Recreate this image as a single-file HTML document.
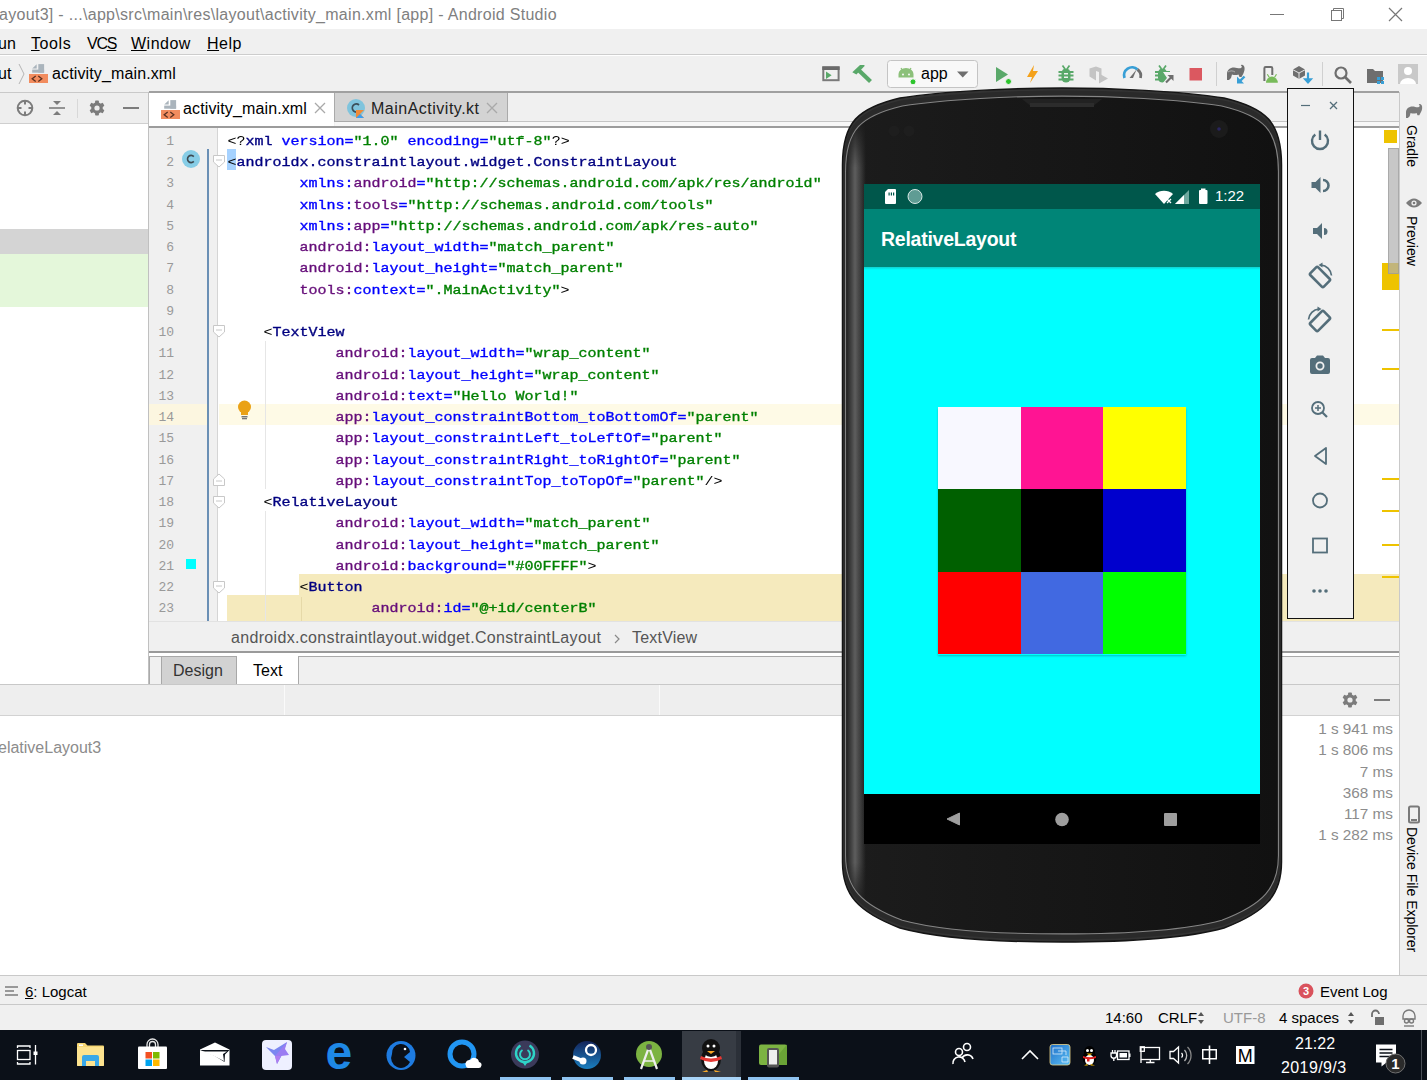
<!DOCTYPE html>
<html><head><meta charset="utf-8">
<style>
*{margin:0;padding:0;box-sizing:border-box}
html,body{width:1427px;height:1080px;overflow:hidden;background:#fff;font-family:"Liberation Sans",sans-serif;position:relative}
.a{position:absolute}
.ui{font-family:"Liberation Sans",sans-serif;white-space:nowrap}
.code{font-family:"Liberation Mono",monospace;font-size:15px;white-space:pre;font-weight:normal;-webkit-text-stroke:0.4px currentColor}
.menu{font-size:16px;color:#000;line-height:20px}
.nav{font-size:16px;color:#000;line-height:20px}
.crumb{font-size:16px;color:#555;line-height:20px}
.tabt{font-size:16px;line-height:20px}
.btxt{font-size:16px;color:#8c8c8c;line-height:20px}
.bar{font-size:15px;color:#000;line-height:20px}
.vt{writing-mode:vertical-rl;font-size:14px;color:#000;line-height:17px}
.tg{color:#000080}
.at{color:#0000ff}
.ns{color:#660e7a}
.vl{color:#008000}
.pl{color:#000;font-weight:normal;-webkit-text-stroke:0}
.lnum{font-family:"Liberation Mono",monospace;font-size:13px;color:#999;width:30px;text-align:right;line-height:21.25px}
.code{line-height:21.25px;transform:scaleY(0.84);transform-origin:0 14.6px}
</style></head><body>

<!-- title bar -->
<div class="a" style="left:0;top:0;width:1427px;height:29px;background:#fff"></div>
<div class="a ui" id="title" style="left:-1px;top:6px;font-size:16px;color:#808080;letter-spacing:0.3px">ayout3] - ...\app\src\main\res\layout\activity_main.xml [app] - Android Studio</div>

<!-- menu bar -->
<div class="a" style="left:0;top:29px;width:1427px;height:26px;background:#f0f0f0;border-bottom:1px solid #cdcdcd"></div>

<!-- nav bar -->
<div class="a" style="left:0;top:56px;width:1427px;height:37px;background:#f0f0f0;border-bottom:1px solid #c9c9c9"></div>


<!-- title text/controls -->
<svg class="a" style="left:1260px;top:0" width="167" height="29">
 <line x1="10" y1="14.5" x2="24" y2="14.5" stroke="#777" stroke-width="1"/>
 <rect x="71.5" y="10.5" width="10" height="10" fill="none" stroke="#777"/>
 <path d="M73.5 10.5 V8.5 H83.5 V18.5 H81.5" fill="none" stroke="#777"/>
 <path d="M129 8 L142 21 M142 8 L129 21" stroke="#777" stroke-width="1.2"/>
</svg>
<!-- menu -->
<div class="a ui menu" style="left:-2px;top:34px">un</div>
<div class="a ui menu" style="left:31px;top:34px;letter-spacing:0.6px"><u>T</u>ools</div>
<div class="a ui menu" style="left:87px;top:34px;letter-spacing:-1.2px">VC<u>S</u></div>
<div class="a ui menu" style="left:131px;top:34px;letter-spacing:0.5px"><u>W</u>indow</div>
<div class="a ui menu" style="left:207px;top:34px;letter-spacing:0.5px"><u>H</u>elp</div>
<!-- nav -->
<div class="a ui nav" style="left:-2px;top:64px">ut</div>
<svg class="a" style="left:17px;top:63px" width="10" height="22"><path d="M2 1 L7 11 L2 21" fill="none" stroke="#b5b5b5" stroke-width="1"/></svg>
<svg class="a xmlico" style="left:29px;top:64px" width="20" height="20"><path d="M3.2 4.5 L7.7 0.3 V4.5 Z" fill="#aab4bc"/><rect x="9.3" y="0.1" width="5.8" height="8.6" fill="#aab4bc"/><rect x="3.2" y="5.6" width="11.9" height="3.1" fill="#aab4bc"/><rect x="0" y="10" width="19" height="9" fill="#f28c5e"/><path d="M6.7 12 L3.2 14.7 L6.7 17.4 M9.3 12 L12.8 14.7 L9.3 17.4" fill="none" stroke="#5a3020" stroke-width="1.3"/></svg>
<div class="a ui nav" style="left:52px;top:64px;letter-spacing:0.13px">activity_main.xml</div>


<!-- nav toolbar -->
<svg class="a" style="left:815px;top:58px" width="612" height="32">
 <!-- terminal -->
 <rect x="8.3" y="9.4" width="15.3" height="12.8" fill="none" stroke="#7a7a7a" stroke-width="2"/>
 <rect x="7.3" y="8.4" width="17.3" height="3.6" fill="#6a6a6a"/>
 <path d="M11 13.6 L16.6 17.2 L11 20.9 Z" fill="#59a869"/>
 <!-- hammer -->
 <path d="M37.3,14.3 L45,7 L49.4,7 L49.6,8 L41.4,16.6 Z" fill="#59a869"/>
 <path d="M44,12.5 L55.5,23.5" stroke="#59a869" stroke-width="4.2"/>
 <!-- app dropdown -->
 <rect x="72.5" y="2.5" width="90" height="27" rx="3" fill="#f8f8f8" stroke="#c4c4c4"/>
 <path d="M83.5 19.5 V16 A7.5 6 0 0 1 98.5 16 V19.5 Z" fill="#8cc07a"/>
 <path d="M86 10 L88 13 M96 10 L94 13" stroke="#8cc07a" stroke-width="1.3"/>
 <circle cx="88" cy="16.5" r="1" fill="#f8f8f8"/><circle cx="94" cy="16.5" r="1" fill="#f8f8f8"/>
 <circle cx="98" cy="23.8" r="3" fill="#2dc52d" stroke="#f8f8f8" stroke-width="1"/>
 <path d="M142 13.5 H153.5 L147.75 19.5 Z" fill="#6e6e6e"/>
 <!-- run -->
 <path d="M181 9 L193 16.5 L181 24 Z" fill="#59a869"/>
 <circle cx="193.5" cy="23.5" r="3" fill="#2dc52d" stroke="#f2f2f2" stroke-width="1"/>
 <!-- lightning -->
 <path d="M219 7 L212 19 H217 L215 25 L223 13 H218 Z" fill="#f4a11a"/>
 <!-- bug -->
 <g fill="#59a869">
  <rect x="243.5" y="13" width="15" height="2"/><rect x="243.5" y="16.5" width="15" height="2"/><rect x="243.5" y="20.5" width="15" height="2"/>
  <rect x="246.5" y="10.5" width="9" height="14" rx="4.5"/>
 </g>
 <path d="M247.5 7.5 L250 11 M254.5 7.5 L252 11" stroke="#59a869" stroke-width="1.7"/>
 <rect x="249" y="15" width="4" height="1.5" fill="#f2f2f2"/><rect x="249" y="18.5" width="4" height="1.5" fill="#f2f2f2"/>
 <!-- gray shield -->
 <path d="M274.5 10.5 L281 8.5 L286.5 10.5 V18 L284 21 V14 L281 13 V22.5 L274.5 18.5 Z" fill="#c4c4c4"/>
 <path d="M284 15.5 L293 20.5 L284 25.5 Z" fill="#c4c4c4"/>
 <!-- gauge -->
 <path d="M309.5 20 A8 8 0 0 1 322.5 11.5" fill="none" stroke="#389fd6" stroke-width="2.8"/>
 <path d="M322.5 11.5 A8 8 0 0 1 325.5 20" fill="none" stroke="#6e6e6e" stroke-width="2.8"/>
 <path d="M314.5 20 L321.5 11.5 L318 20 Z" fill="#6e6e6e"/>
 <!-- bug arrow -->
 <g fill="#59a869">
  <rect x="340" y="13" width="15" height="2"/><rect x="340" y="16.5" width="11" height="2"/><rect x="340" y="20.5" width="9" height="2"/>
  <rect x="343" y="10.5" width="9" height="14" rx="4.5"/>
 </g>
 <path d="M344 7.5 L346.5 11 M351 7.5 L348.5 11" stroke="#59a869" stroke-width="1.7"/>
 <path d="M348 14 L352 20 L347 26 H358 V14 Z" fill="#f2f2f2"/>
 <path d="M351 24.5 L357 18.5" stroke="#6e6e6e" stroke-width="2.2"/><path d="M352.5 17 H358.5 V23 Z" fill="#6e6e6e"/>
 <!-- stop -->
 <rect x="374.5" y="10" width="12.5" height="12.5" fill="#db5860"/>
 <line x1="401.5" y1="4" x2="401.5" y2="28" stroke="#d0d0d0"/>
 <!-- gradle -->
 <path d="M412,22 L412,16 C412,12 415,9.5 419,9.5 C422,9.5 424,11 426,10 C427.3,9.2 427,7.8 425.8,7.5 L426.5,6.8 C428.8,6.8 430,9 429.5,12 C429,15 427.5,17 426.5,19 L424.5,19 L423.5,16.5 C421.5,17.3 419,17.3 417,16.5 L416,20 L414,22 Z" fill="#6e6e6e"/>
 <path d="M413,14 C415,12.5 418,12.5 420,14" fill="none" stroke="#f2f2f2" stroke-width="0.8" opacity="0.6"/>
 <path d="M429.5,18.5 L424.5,23.5" stroke="#389fd6" stroke-width="2.4"/><path d="M422,18.5 V25.5 H429 Z" fill="#389fd6"/>
 <!-- device android -->
 <path d="M449.4,23 V10.3 A1.3,1.3 0 0 1 450.7,9 H456 A1.3,1.3 0 0 1 457.3,10.3 V17" fill="none" stroke="#6e6e6e" stroke-width="2"/>
 <path d="M451,24.8 A5.9,6.2 0 0 1 462.8,24.8 Z" fill="#78bb5a"/>
 <path d="M452.3,16.3 L454.2,19.3 M461.5,16.3 L459.6,19.3" stroke="#78bb5a" stroke-width="1.2"/>
 <!-- package -->
 <path d="M478,11.5 L484,8 L490,11.5 V17.5 L484,21 L478,17.5 Z" fill="#6e6e6e"/>
 <path d="M478,11.8 L484,15 L490,11.8 M484,15 V21" fill="none" stroke="#f2f2f2" stroke-width="0.9"/>
 <path d="M493,14.5 V21" stroke="#389fd6" stroke-width="2.2"/><path d="M487.8,20.2 H498.2 L493,26 Z" fill="#389fd6"/>
 <line x1="507.5" y1="4" x2="507.5" y2="28" stroke="#d0d0d0"/>
 <!-- search -->
 <circle cx="526" cy="15" r="5.5" fill="none" stroke="#6e6e6e" stroke-width="2.2"/>
 <path d="M530 19 L536 25" stroke="#6e6e6e" stroke-width="2.6"/>
 <!-- folder -->
 <path d="M552 11 H558 L560 13 H568 V25 H552 Z" fill="#6e6e6e"/>
 <rect x="562" y="19" width="3" height="3" fill="#389fd6"/><rect x="566" y="19" width="3" height="3" fill="#389fd6"/><rect x="562" y="23" width="3" height="3" fill="#389fd6"/><rect x="566" y="23" width="3" height="3" fill="#389fd6"/>
 <!-- avatar -->
 <rect x="583" y="6" width="20" height="20" fill="#c9c9c9"/>
 <circle cx="593" cy="13" r="4" fill="#fff"/><path d="M585 26 A8 6 0 0 1 601 26 Z" fill="#fff"/>
</svg>
<div class="a ui nav" style="left:921px;top:64px">app</div>

<!-- left panel -->
<div class="a" style="left:0;top:93px;width:148px;height:31px;background:#eeeeee;border-bottom:1px solid #cfcfcf"></div>
<div class="a" style="left:0;top:124px;width:148px;height:560px;background:#fff"></div>
<div class="a" style="left:0;top:229px;width:148px;height:25px;background:#d4d4d4"></div>
<div class="a" style="left:0;top:254px;width:148px;height:53px;background:#e4f7da"></div>
<div class="a" style="left:148px;top:92px;width:1px;height:592px;background:#c0c0c0"></div>


<!-- left header icons -->
<svg class="a" style="left:0;top:92px" width="148" height="32">
 <circle cx="25" cy="16" r="7.3" fill="none" stroke="#7c7c7c" stroke-width="2"/>
 <path d="M25 8.5 V12.5 M25 19.5 V23.5 M17.5 16 H21.5 M28.5 16 H32.5" stroke="#7c7c7c" stroke-width="2"/>
 <path d="M49 16 H65" stroke="#7c7c7c" stroke-width="1.6"/>
 <path d="M53 9 H61 L57 13 Z M53 23 H61 L57 19 Z" fill="#7c7c7c"/>
 <line x1="77.5" y1="7" x2="77.5" y2="26" stroke="#d8d8d8"/>
 <g transform="translate(97,16)" fill="#7c7c7c">
  <circle r="5.8"/>
  <rect x="-1.9" y="-7.6" width="3.8" height="15.2" rx="0.8"/><rect x="-1.9" y="-7.6" width="3.8" height="15.2" rx="0.8" transform="rotate(60)"/><rect x="-1.9" y="-7.6" width="3.8" height="15.2" rx="0.8" transform="rotate(120)"/>
  <circle r="2.6" fill="#eee"/>
 </g>
 <rect x="123" y="15" width="16" height="2" fill="#7c7c7c"/>
</svg>

<!-- editor tabs -->
<div class="a" style="left:149px;top:92px;width:1250px;height:36px;background:#f0f0f0"></div>


<div class="a" style="left:149px;top:91px;width:1250px;height:2px;background:#a0a0a0"></div>
<div class="a" style="left:149px;top:93px;width:185px;height:35px;background:#fff"></div>
<div class="a" style="left:507px;top:121px;width:892px;height:1px;background:#c4c4c4"></div>
<div class="a" style="left:507px;top:122px;width:892px;height:4px;background:#f7f7f7"></div>
<div class="a" style="left:334px;top:93px;width:174px;height:29px;background:#d3d3d3;border:1px solid #aaa;border-top:none"></div>
<div class="a" style="left:335px;top:122px;width:172px;height:4px;background:#f7f7f7"></div>
<div class="a" style="left:149px;top:126px;width:1250px;height:2px;background:#9c9c9c"></div>
<svg class="a" style="left:161px;top:100px" width="20" height="20"><path d="M3.2 4.5 L7.7 0.3 V4.5 Z" fill="#aab4bc"/><rect x="9.3" y="0.1" width="5.8" height="8.6" fill="#aab4bc"/><rect x="3.2" y="5.6" width="11.9" height="3.1" fill="#aab4bc"/><rect x="0" y="10" width="19" height="9" fill="#f28c5e"/><path d="M6.7 12 L3.2 14.7 L6.7 17.4 M9.3 12 L12.8 14.7 L9.3 17.4" fill="none" stroke="#5a3020" stroke-width="1.3"/></svg>
<div class="a ui nav" style="left:183px;top:99px;letter-spacing:0.13px">activity_main.xml</div>
<svg class="a" style="left:314px;top:102px" width="12" height="12"><path d="M1 1 L11 11 M11 1 L1 11" stroke="#a9a9a9" stroke-width="1.3"/></svg>
<svg class="a" style="left:346px;top:98px" width="22" height="22"><circle cx="10" cy="10" r="9" fill="#7fc4dd"/><path d="M13 7 A4 4 0 1 0 13 13" fill="none" stroke="#3b4f5a" stroke-width="1.8"/><path d="M10 12 H18 L14 16 L18 20 H10 Z" fill="#f08a38"/><path d="M10 20 L14 16 L18 20 Z" fill="#3a9ef0"/></svg>
<div class="a ui nav" style="left:371px;top:99px;color:#222;letter-spacing:0.5px">MainActivity.kt</div>
<svg class="a" style="left:486px;top:102px" width="12" height="12"><path d="M1 1 L11 11 M11 1 L1 11" stroke="#a9a9a9" stroke-width="1.3"/></svg>

<!-- editor -->
<div class="a" style="left:149px;top:128px;width:1250px;height:493px;background:#fff"></div>
<div class="a" style="left:149px;top:128px;width:69px;height:493px;background:#f0f0f0;border-right:1px solid #d5d5d5"></div>

<!-- breadcrumb -->
<div class="a" style="left:149px;top:621px;width:1250px;height:30px;background:#f0f0f0;border-top:1px solid #e2e2e2"></div>
<div class="a" style="left:149px;top:651px;width:1250px;height:2px;background:#9a9a9a"></div>
<!-- design/text tab bar -->
<div class="a" style="left:149px;top:653px;width:1250px;height:31px;background:#f0f0f0"></div>

<!-- build panel header -->
<div class="a" style="left:0;top:684px;width:1399px;height:32px;background:#eeeeee;border-top:1px solid #c8c8c8;border-bottom:1px solid #d2d2d2"></div>
<div class="a" style="left:0;top:716px;width:1399px;height:259px;background:#fff"></div>


<!-- right sidebar -->
<div class="a" style="left:1399px;top:92px;width:28px;height:883px;background:#f0f0f0;border-left:1px solid #c9c9c9"></div>

<!-- bottom tool bar -->
<div class="a" style="left:0;top:975px;width:1427px;height:30px;background:#f0f0f0;border-top:1px solid #c9c9c9;border-bottom:1px solid #c9c9c9"></div>
<!-- status bar -->
<div class="a" style="left:0;top:1005px;width:1427px;height:25px;background:#f0f0f0"></div>

<!-- taskbar -->
<div class="a" style="left:0;top:1030px;width:1427px;height:50px;background:#0b1018"></div>


<!-- line highlights -->
<div class="a" style="left:149px;top:404px;width:58px;height:21px;background:#fcf6e0"></div>
<div class="a" style="left:219px;top:404px;width:1180px;height:21px;background:#fefae6"></div>
<div class="a" style="left:299px;top:574px;width:1100px;height:21px;background:#f5eabd"></div>
<div class="a" style="left:227px;top:595px;width:1172px;height:26px;background:#f5eabd"></div>
<div class="a" style="left:207px;top:149px;width:1.5px;height:472px;background:#6a8fb5"></div>
<div class="a" style="left:265px;top:341px;width:1px;height:148px;background:#e6e6e6"></div>
<div class="a" style="left:265px;top:511px;width:1px;height:110px;background:#e6e6e6"></div>
<div class="a" style="left:301px;top:597px;width:1px;height:24px;background:#e6d9a8"></div>
<!-- C badge -->
<svg class="a" style="left:181px;top:149px" width="20" height="20"><circle cx="10" cy="10" r="9" fill="#87cde6"/><path d="M12.8 7.6 A3.6 3.6 0 1 0 12.8 12.4" fill="none" stroke="#3d4a52" stroke-width="1.6"/></svg>
<!-- selection -->
<div class="a" style="left:227px;top:149px;width:9px;height:21px;background:#a6d2ff"></div>
<!-- fold markers -->
<svg class="a" style="left:211px;top:150px" width="16" height="460">
 <g fill="#fff" stroke="#c8c8c8" stroke-width="1">
 <path d="M2.5 5.5 H13.5 V12 L8 17 L2.5 12 Z"/>
 <path d="M2.5 175.5 H13.5 V182 L8 187 L2.5 182 Z"/>
 <path d="M2.5 346.5 H13.5 V353 L8 358 L2.5 353 Z"/>
 <path d="M2.5 431.5 H13.5 V438 L8 443 L2.5 438 Z"/>
 <path d="M2.5 335.5 H13.5 V329 L8 324 L2.5 329 Z"/>
 </g>
 <g stroke="#c8c8c8"><path d="M5 10 H11 M5 180 H11 M5 351 H11 M5 436 H11 M5 331 H11"/></g>
</svg>
<!-- bulb -->
<svg class="a" style="left:236px;top:400px" width="18" height="20"><circle cx="8.5" cy="7" r="6.5" fill="#eaa116"/><rect x="5" y="12" width="7" height="3" fill="#eaa116"/><rect x="5.5" y="16" width="6" height="1.5" fill="#777"/><rect x="6" y="18" width="5" height="1.3" fill="#777"/></svg>
<!-- cyan square -->
<div class="a" style="left:186px;top:559px;width:10px;height:10px;background:#00ffff"></div>
<!-- error stripe -->
<div class="a" style="left:1384px;top:130px;width:13px;height:13px;background:#eec300"></div>
<div class="a" style="left:1382px;top:263px;width:17px;height:27px;background:#eec300"></div>
<div class="a" style="left:1388px;top:148px;width:11px;height:126px;background:rgba(175,175,175,0.7);border:1px solid rgba(150,150,150,0.6)"></div>
<div class="a" style="left:1382px;top:329px;width:17px;height:2px;background:#eec300"></div>
<div class="a" style="left:1382px;top:368px;width:17px;height:2px;background:#eec300"></div>
<div class="a" style="left:1382px;top:478px;width:17px;height:2px;background:#eec300"></div>
<div class="a" style="left:1382px;top:510px;width:17px;height:2px;background:#eec300"></div>
<div class="a" style="left:1382px;top:544px;width:17px;height:2px;background:#eec300"></div>
<div class="a" style="left:1382px;top:576px;width:17px;height:2px;background:#eec300"></div>
<div class="a" style="left:1399px;top:92px;width:1px;height:530px;background:#c9c9c9"></div>


<!-- right sidebar content -->
<svg class="a" style="left:1403px;top:100px" width="24" height="115">
 <path transform="translate(3,4) scale(0.92) translate(-412,-6.8)" d="M412,22 L412,16 C412,12 415,9.5 419,9.5 C422,9.5 424,11 426,10 C427.3,9.2 427,7.8 425.8,7.5 L426.5,6.8 C428.8,6.8 430,9 429.5,12 C429,15 427.5,17 426.5,19 L424.5,19 L423.5,16.5 C421.5,17.3 419,17.3 417,16.5 L416,20 L414,22 Z" fill="#7a7a7a"/>
 <path d="M3 103 Q11 94 19 103 Q11 112 3 103 Z" fill="#7a7a7a"/><circle cx="11" cy="103" r="2.6" fill="#f0f0f0"/><circle cx="11" cy="103" r="1.3" fill="#7a7a7a"/>
</svg>
<div class="a ui vt" style="left:1403px;top:125px">Gradle</div>
<div class="a ui vt" style="left:1403px;top:216px">Preview</div>
<svg class="a" style="left:1406px;top:805px" width="16" height="19"><rect x="3" y="1.5" width="10" height="16" rx="1.5" fill="none" stroke="#7a7a7a" stroke-width="2"/><rect x="5" y="14" width="6" height="2" fill="#7a7a7a"/></svg>
<div class="a ui vt" style="left:1403px;top:827px">Device File Explorer</div>


<!-- taskbar icons -->
<div class="a" style="left:682px;top:1031px;width:54px;height:49px;background:#373c44"></div>
<div class="a" style="left:736px;top:1031px;width:5px;height:49px;background:#2b3038"></div>
<div class="a" style="left:500px;top:1077px;width:51px;height:3px;background:#8fc3f0"></div>
<div class="a" style="left:562px;top:1077px;width:51px;height:3px;background:#8fc3f0"></div>
<div class="a" style="left:624px;top:1077px;width:51px;height:3px;background:#8fc3f0"></div>
<div class="a" style="left:682px;top:1077px;width:59px;height:3px;background:#a8d4f8"></div>
<div class="a" style="left:748px;top:1077px;width:51px;height:3px;background:#8fc3f0"></div>
<svg class="a" style="left:0;top:1030px" width="1427" height="50">
 <!-- task view -->
 <g fill="none" stroke="#fff" stroke-width="1.3"><path d="M17.5 18 V16 H30 V18 M17.5 32 V34 H30 V32"/><rect x="17.5" y="20.5" width="12.5" height="9"/><path d="M35.5 15 V34.5"/></g>
 <rect x="33.5" y="21.5" width="4" height="3.5" fill="#fff"/>
 <!-- explorer -->
 <path d="M77 14 A1 1 0 0 1 78 13 H85 L87.5 15.5 H103 A1 1 0 0 1 104 16.5 V35 A1 1 0 0 1 103 36 H78 A1 1 0 0 1 77 35 Z" fill="#f7d774"/>
 <path d="M77 17 H104 V35 A1 1 0 0 1 103 36 H78 A1 1 0 0 1 77 35 Z" fill="#fde38f"/>
 <rect x="79" y="14.5" width="4" height="1.5" fill="#fff"/>
 <path d="M82 36 V27 A2 2 0 0 1 84 25 H97 A2 2 0 0 1 99 27 V36 H95 V31 H86 V36 Z" fill="#3aa8e8"/>
 <!-- store -->
 <path d="M147 17 V14.5 A5.5 5.5 0 0 1 158 14.5 V17 M149.5 17 V14.5 A3 3 0 0 1 155.5 14.5 V17" fill="none" stroke="#e8e8e8" stroke-width="1.3"/>
 <rect x="138" y="16.5" width="29" height="22.5" rx="1" fill="#fff"/>
 <rect x="145.5" y="22" width="6.5" height="6.5" fill="#f25022"/><rect x="153" y="22" width="6.5" height="6.5" fill="#7fba00"/><rect x="145.5" y="29.5" width="6.5" height="6.5" fill="#00a4ef"/><rect x="153" y="29.5" width="6.5" height="6.5" fill="#ffb900"/>
 <!-- mail -->
 <path d="M200 19.5 L215 12.5 L229.5 19.5 V35.5 H200 Z" fill="#fff"/>
 <path d="M200 20 H229.5 L225 24.5 L224.5 32 L214 25.5 Z" fill="#0b1018"/>
 <path d="M201.5 21.5 L214 26 L224 31 L223 24 L227 21.5 Z" fill="#fff"/>
 <!-- feather app -->
 <rect x="262" y="10" width="30" height="30" rx="4" fill="#eef0ff"/>
 <path d="M266 17 L274 20 L287 12 L282 25 L277 34 L275 26 Z" fill="#7b86f0"/><path d="M275 26 L287 12 L285 19 L289 25 L281 26 Z" fill="#9a7cf2"/><path d="M277 34 L281 26 L275 26 Z" fill="#b07cf0"/>
 <!-- edge -->
 <text x="325.5" y="39" font-size="48" font-weight="bold" font-family="Liberation Sans" fill="#1e88e5">e</text>
 <!-- dolphin -->
 <circle cx="401" cy="25.5" r="14.5" fill="#1e7be0"/><path d="M392 24 A9 9 0 0 1 410 22 L404 27 L410 32 A9 9 0 0 1 392 24 Z" fill="#0b1018"/><circle cx="405" cy="19" r="1.3" fill="#fff"/>
 <!-- Q browser -->
 <circle cx="462" cy="24" r="12" fill="none" stroke="#2196f3" stroke-width="5"/>
 <path d="M466 36 A4 4 0 0 1 470 30 A5 5 0 0 1 479 32 A3 3 0 0 1 478 38 H468 A2 2 0 0 1 466 36 Z" fill="#fff"/>
 <!-- dark circle -->
 <circle cx="525" cy="24.5" r="14" fill="#3b3a5a"/>
 <path d="M520.5 15.5 A9 9 0 1 0 529.5 15.5" fill="none" stroke="#2ed3c7" stroke-width="2.4"/>
 <path d="M522.5 20 A5 5 0 1 0 527.5 20" fill="none" stroke="#2ed3c7" stroke-width="2"/>
 <path d="M523 33 H527 L525 36 Z" fill="#2ed3c7"/>
 <!-- steam -->
 <defs><linearGradient id="stg" x1="0" y1="0" x2="0" y2="1"><stop offset="0" stop-color="#14245a"/><stop offset="1" stop-color="#1a7fc0"/></linearGradient></defs><circle cx="587" cy="25" r="14" fill="url(#stg)"/><circle cx="591" cy="20" r="5" fill="none" stroke="#fff" stroke-width="2.3"/><path d="M573 27 L583 31" stroke="#fff" stroke-width="4"/><circle cx="583" cy="31" r="3.5" fill="#fff"/>
 <!-- android studio -->
 <circle cx="649" cy="24" r="13" fill="#7cb342"/><path d="M641 39 L649 17 L657 39" fill="none" stroke="#eee" stroke-width="2.2"/><path d="M644 31 H654" stroke="#eee" stroke-width="1.5"/><circle cx="649" cy="17" r="3" fill="#555"/>
 <!-- QQ -->
 <ellipse cx="711" cy="29" rx="10" ry="12" fill="#111"/><ellipse cx="711" cy="31" rx="7" ry="8" fill="#fff"/><ellipse cx="711" cy="18" rx="9" ry="9" fill="#111"/><path d="M701 26 Q711 31 721 26 L722 29 Q711 35 700 29 Z" fill="#e53935"/><path d="M707 21 L711 24 L715 21 Z" fill="#f9a825"/><circle cx="708" cy="16" r="1.5" fill="#fff"/><circle cx="714" cy="16" r="1.5" fill="#fff"/>
 <path d="M702 42 H708 L707 40 Z M714 40 L715 42 H721 Z" fill="#f9a825"/>
 <!-- green phone -->
 <rect x="759" y="14.5" width="28" height="20.5" rx="2" fill="#7cb342"/><path d="M787 14.5 V35 H770 Z" fill="#6aa336"/><rect x="767" y="18" width="12" height="19.5" rx="2" fill="#555"/><rect x="769" y="20" width="8" height="14.5" fill="#eee"/>
 <!-- people -->
 <g fill="none" stroke="#fff" stroke-width="1.6"><circle cx="959" cy="22" r="3.5"/><path d="M953 34 A6 6 0 0 1 965 32"/><circle cx="967" cy="17" r="3.5"/><path d="M962 28 A6 6 0 0 1 973 29"/></g>
 <!-- chevron -->
 <path d="M1022 29 L1030 21 L1038 29" fill="none" stroke="#fff" stroke-width="1.6"/>
 <!-- intel -->
 <defs><linearGradient id="itg" x1="0" y1="0" x2="1" y2="1"><stop offset="0" stop-color="#1f6fc8"/><stop offset="1" stop-color="#5cc0f5"/></linearGradient></defs>
 <rect x="1050" y="14.5" width="20" height="20.5" rx="2.5" fill="url(#itg)" stroke="#e9d48a" stroke-width="0.8"/>
 <g fill="none" stroke="#d8ecfb" stroke-width="0.8"><rect x="1053" y="18" width="9" height="6"/><path d="M1058 21 H1066 V25 M1062 27 H1068 V32 H1062 Z"/></g>
 <!-- small QQ -->
 <ellipse cx="1089.5" cy="28" rx="7" ry="7.5" fill="#000"/><ellipse cx="1089.5" cy="22" rx="5.5" ry="6" fill="#000"/>
 <ellipse cx="1089.5" cy="30" rx="4.5" ry="5" fill="#fff"/>
 <circle cx="1087.5" cy="20.5" r="1.5" fill="#fff"/><circle cx="1091.5" cy="20.5" r="1.5" fill="#fff"/>
 <path d="M1086.5 23.5 H1092.5 L1089.5 25.5 Z" fill="#f5b800"/>
 <path d="M1083 26 Q1089.5 28.5 1096 26 V28 Q1089.5 30.5 1083 28 Z" fill="#e02020"/><rect x="1087" y="27.5" width="2.5" height="4" fill="#e02020"/>
 <path d="M1084 35.5 H1088 L1087 34 Z M1091 34 L1090.5 35.5 H1095 Z" fill="#f5b800"/>
 <!-- tpower -->
 <g fill="none" stroke="#fff" stroke-width="1.3"><path d="M1112.5 20 V23 M1115 20 V23 M1111 23 H1116.5 V25.5 A2.7 2.7 0 0 1 1111 25.5 Z M1113.8 28 V31"/><rect x="1117.5" y="21" width="11.5" height="8.5"/></g>
 <rect x="1119.5" y="23" width="7.5" height="4.5" fill="#fff"/><rect x="1129" y="23.5" width="1.5" height="3.5" fill="#fff"/>
 <!-- network -->
 <g fill="none" stroke="#fff" stroke-width="1.3"><rect x="1141" y="17.5" width="18.5" height="12"/><path d="M1150.3 29.5 V32.5 M1146 32.5 H1154.5 M1141 29.5 V33"/><rect x="1140.3" y="16.8" width="4" height="4.5"/></g>
 <!-- volume -->
 <g fill="none" stroke="#fff" stroke-width="1.3"><path d="M1170 21.5 H1173.5 L1178.5 17 V33 L1173.5 28.5 H1170 Z"/><path d="M1181.5 23 A3 3 0 0 1 1181.5 27.5"/><path d="M1184.5 20 A8 8 0 0 1 1184.5 31" stroke="#bbb"/><path d="M1187.5 17 A12 12 0 0 1 1187.5 34" stroke="#888"/></g>
 <!-- M -->
 <rect x="1236" y="16" width="18.5" height="18" fill="#fff"/>
 <text x="1245.2" y="32" font-size="18" font-family="Liberation Sans" fill="#000" text-anchor="middle">M</text>
 <!-- notification -->
 <path d="M1376 14.5 H1396 V32.5 H1386.5 L1381.5 36.5 V32.5 H1376 Z" fill="#fff"/><path d="M1379.5 19.5 H1392.5 M1379.5 23 H1392.5 M1379.5 26.5 H1390" stroke="#0b1018" stroke-width="1.3"/>
 <circle cx="1395.5" cy="33.5" r="9.5" fill="#2b2b2b" stroke="#707070" stroke-width="1"/><text x="1395.5" y="39" font-size="15" font-weight="bold" fill="#fff" text-anchor="middle" font-family="Liberation Sans">1</text>
 <line x1="1421.5" y1="0" x2="1421.5" y2="50" stroke="#4a4f57" stroke-width="1"/>
</svg>
<svg class="a" style="left:1200px;top:1044px" width="20" height="22"><rect x="2.75" y="5.75" width="13.5" height="9" fill="none" stroke="#fff" stroke-width="1.5"/><path d="M9.5 1.5 V20" stroke="#fff" stroke-width="1.6"/></svg>
<div class="a ui" style="left:1295px;top:1034px;font-size:16px;color:#fff;line-height:20px;letter-spacing:0px">21:22</div>
<div class="a ui" style="left:1281px;top:1057.5px;font-size:16px;color:#fff;line-height:20px;letter-spacing:0.4px">2019/9/3</div>

<!-- breadcrumb text -->
<div class="a ui crumb" id="crumb1" style="left:231px;top:628px;letter-spacing:0.33px">androidx.constraintlayout.widget.ConstraintLayout</div>
<svg class="a" style="left:613px;top:633px" width="8" height="12"><path d="M2 2 L6 6 L2 10" fill="none" stroke="#8a8a8a" stroke-width="1.2"/></svg>
<div class="a ui crumb" id="crumb2" style="left:632px;top:628px;letter-spacing:0.2px">TextView</div>
<!-- design / text tabs -->
<div class="a" style="left:149px;top:653px;width:1250px;height:3px;background:#fff"></div>
<div class="a" style="left:149px;top:656px;width:13px;height:28px;background:#f0f0f0;border-left:1px solid #aaa;border-top:1px solid #aaa"></div>
<div class="a" style="left:161px;top:656px;width:76px;height:28px;background:#d2d2d2;border:1px solid #a8a8a8;border-bottom:none"></div>
<div class="a" style="left:237px;top:655px;width:62px;height:29px;background:#fff"></div>
<div class="a" style="left:298px;top:656px;width:1101px;height:28px;background:#f0f0f0;border-left:1px solid #aaa;border-top:1px solid #aaa"></div>
<div class="a ui tabt" id="design" style="left:173px;top:661px;color:#333">Design</div>
<div class="a ui tabt" id="textt" style="left:253px;top:661px;color:#000">Text</div>
<!-- build header -->
<div class="a" style="left:284px;top:685px;width:1px;height:30px;background:#fafafa"></div>
<div class="a" style="left:659px;top:685px;width:1px;height:30px;background:#fafafa"></div>
<svg class="a" style="left:1338px;top:688px" width="60" height="24">
 <g transform="translate(12,12)" fill="#7c7c7c">
  <circle r="5.8"/>
  <rect x="-1.9" y="-7.6" width="3.8" height="15.2" rx="0.8"/><rect x="-1.9" y="-7.6" width="3.8" height="15.2" rx="0.8" transform="rotate(60)"/><rect x="-1.9" y="-7.6" width="3.8" height="15.2" rx="0.8" transform="rotate(120)"/>
  <circle r="2.6" fill="#eee"/>
 </g>
 <rect x="36" y="11" width="16" height="2" fill="#7c7c7c"/>
</svg>
<div class="a ui btxt" style="left:-2px;top:738px">elativeLayout3</div>
<div class="a ui btxt" style="right:34px;top:718px;text-align:right;line-height:21.3px;font-size:15.3px">1 s 941 ms<br>1 s 806 ms<br>7 ms<br>368 ms<br>117 ms<br>1 s 282 ms</div>
<!-- bottom bar -->
<svg class="a" style="left:5px;top:986px" width="16" height="12"><path d="M0 1 H13 M0 5 H9 M0 9 H13" stroke="#7c7c7c" stroke-width="1.6"/></svg>
<div class="a ui bar" style="left:25px;top:982px"><u>6</u>: Logcat</div>
<svg class="a" style="left:1298px;top:983px" width="16" height="16"><circle cx="8" cy="8" r="7.5" fill="#d9525c"/><text x="8" y="12" font-size="11" font-weight="bold" fill="#fff" text-anchor="middle" font-family="Liberation Sans">3</text></svg>
<div class="a ui bar" style="left:1320px;top:982px">Event Log</div>
<!-- status bar -->
<div class="a ui bar" style="left:1105px;top:1008px">14:60</div>
<div class="a ui bar" style="left:1158px;top:1008px">CRLF</div>
<div class="a ui bar" style="left:1223px;top:1008px;color:#999">UTF-8</div>
<div class="a ui bar" style="left:1279px;top:1008px">4 spaces</div>
<svg class="a" style="left:1197px;top:1010px" width="8" height="16"><path d="M1 6 L4 2 L7 6 Z M1 10 L4 14 L7 10 Z" fill="#555"/></svg>
<svg class="a" style="left:1347px;top:1010px" width="8" height="16"><path d="M1 6 L4 2 L7 6 Z M1 10 L4 14 L7 10 Z" fill="#555"/></svg>
<svg class="a" style="left:1368px;top:1008px" width="60" height="20">
 <path d="M4 9 V6 A3.5 3.5 0 0 1 11 6" fill="none" stroke="#6e6e6e" stroke-width="1.8"/>
 <rect x="7" y="9" width="9" height="8" fill="#6e6e6e"/>
 <g fill="none" stroke="#7a7a7a" stroke-width="1.4"><path d="M35 8 A6 6 0 0 1 47 8 V11 H35 Z"/><circle cx="38.5" cy="13" r="2"/><circle cx="43.5" cy="13" r="2"/><path d="M36 18 H46"/></g>
</svg>
<div class="a code" style="left:227.5px;top:130.8px"><span class="pl">&lt;?</span><span class="tg">xml</span><span class="pl"> </span><span class="at">version=</span><span class="vl">&quot;1.0&quot;</span><span class="pl"> </span><span class="at">encoding=</span><span class="vl">&quot;utf-8&quot;</span><span class="pl">?&gt;</span></div>
<div class="a lnum" style="left:144px;top:130.8px">1</div>
<div class="a code" style="left:227.5px;top:152.05px"><span class="pl">&lt;</span><span class="tg">androidx.constraintlayout.widget.ConstraintLayout</span></div>
<div class="a lnum" style="left:144px;top:152.05px">2</div>
<div class="a code" style="left:227.5px;top:173.3px"><span class="pl">        </span><span class="at">xmlns:</span><span class="ns">android</span><span class="at">=</span><span class="vl">&quot;http://schemas.android.com/apk/res/android&quot;</span></div>
<div class="a lnum" style="left:144px;top:173.3px">3</div>
<div class="a code" style="left:227.5px;top:194.55px"><span class="pl">        </span><span class="at">xmlns:</span><span class="ns">tools</span><span class="at">=</span><span class="vl">&quot;http://schemas.android.com/tools&quot;</span></div>
<div class="a lnum" style="left:144px;top:194.55px">4</div>
<div class="a code" style="left:227.5px;top:215.8px"><span class="pl">        </span><span class="at">xmlns:</span><span class="ns">app</span><span class="at">=</span><span class="vl">&quot;http://schemas.android.com/apk/res-auto&quot;</span></div>
<div class="a lnum" style="left:144px;top:215.8px">5</div>
<div class="a code" style="left:227.5px;top:237.05px"><span class="pl">        </span><span class="ns">android:</span><span class="at">layout_width=</span><span class="vl">&quot;match_parent&quot;</span></div>
<div class="a lnum" style="left:144px;top:237.05px">6</div>
<div class="a code" style="left:227.5px;top:258.3px"><span class="pl">        </span><span class="ns">android:</span><span class="at">layout_height=</span><span class="vl">&quot;match_parent&quot;</span></div>
<div class="a lnum" style="left:144px;top:258.3px">7</div>
<div class="a code" style="left:227.5px;top:279.55px"><span class="pl">        </span><span class="ns">tools:</span><span class="at">context=</span><span class="vl">&quot;.MainActivity&quot;</span><span class="pl">&gt;</span></div>
<div class="a lnum" style="left:144px;top:279.55px">8</div>
<div class="a code" style="left:227.5px;top:300.8px"></div>
<div class="a lnum" style="left:144px;top:300.8px">9</div>
<div class="a code" style="left:227.5px;top:322.05px"><span class="pl">    &lt;</span><span class="tg">TextView</span></div>
<div class="a lnum" style="left:144px;top:322.05px">10</div>
<div class="a code" style="left:227.5px;top:343.3px"><span class="pl">            </span><span class="ns">android:</span><span class="at">layout_width=</span><span class="vl">&quot;wrap_content&quot;</span></div>
<div class="a lnum" style="left:144px;top:343.3px">11</div>
<div class="a code" style="left:227.5px;top:364.55px"><span class="pl">            </span><span class="ns">android:</span><span class="at">layout_height=</span><span class="vl">&quot;wrap_content&quot;</span></div>
<div class="a lnum" style="left:144px;top:364.55px">12</div>
<div class="a code" style="left:227.5px;top:385.8px"><span class="pl">            </span><span class="ns">android:</span><span class="at">text=</span><span class="vl">&quot;Hello World!&quot;</span></div>
<div class="a lnum" style="left:144px;top:385.8px">13</div>
<div class="a code" style="left:227.5px;top:407.05px"><span class="pl">            </span><span class="ns">app:</span><span class="at">layout_constraintBottom_toBottomOf=</span><span class="vl">&quot;parent&quot;</span></div>
<div class="a lnum" style="left:144px;top:407.05px">14</div>
<div class="a code" style="left:227.5px;top:428.3px"><span class="pl">            </span><span class="ns">app:</span><span class="at">layout_constraintLeft_toLeftOf=</span><span class="vl">&quot;parent&quot;</span></div>
<div class="a lnum" style="left:144px;top:428.3px">15</div>
<div class="a code" style="left:227.5px;top:449.55px"><span class="pl">            </span><span class="ns">app:</span><span class="at">layout_constraintRight_toRightOf=</span><span class="vl">&quot;parent&quot;</span></div>
<div class="a lnum" style="left:144px;top:449.55px">16</div>
<div class="a code" style="left:227.5px;top:470.8px"><span class="pl">            </span><span class="ns">app:</span><span class="at">layout_constraintTop_toTopOf=</span><span class="vl">&quot;parent&quot;</span><span class="pl">/&gt;</span></div>
<div class="a lnum" style="left:144px;top:470.8px">17</div>
<div class="a code" style="left:227.5px;top:492.05px"><span class="pl">    &lt;</span><span class="tg">RelativeLayout</span></div>
<div class="a lnum" style="left:144px;top:492.05px">18</div>
<div class="a code" style="left:227.5px;top:513.3px"><span class="pl">            </span><span class="ns">android:</span><span class="at">layout_width=</span><span class="vl">&quot;match_parent&quot;</span></div>
<div class="a lnum" style="left:144px;top:513.3px">19</div>
<div class="a code" style="left:227.5px;top:534.55px"><span class="pl">            </span><span class="ns">android:</span><span class="at">layout_height=</span><span class="vl">&quot;match_parent&quot;</span></div>
<div class="a lnum" style="left:144px;top:534.55px">20</div>
<div class="a code" style="left:227.5px;top:555.8px"><span class="pl">            </span><span class="ns">android:</span><span class="at">background=</span><span class="vl">&quot;#00FFFF&quot;</span><span class="pl">&gt;</span></div>
<div class="a lnum" style="left:144px;top:555.8px">21</div>
<div class="a code" style="left:227.5px;top:577.05px"><span class="pl">        &lt;</span><span class="tg">Button</span></div>
<div class="a lnum" style="left:144px;top:577.05px">22</div>
<div class="a code" style="left:227.5px;top:598.3px"><span class="pl">                </span><span class="ns">android:</span><span class="at">id=</span><span class="vl">&quot;@+id/centerB&quot;</span></div>
<div class="a lnum" style="left:144px;top:598.3px">23</div>

<!-- phone -->
<svg class="a" style="left:0;top:0" width="1427" height="1080">
 <defs>
  
  <linearGradient id="gl" x1="0" x2="1" y1="0" y2="0">
   <stop offset="0" stop-color="#6a6a6a" stop-opacity="0"/><stop offset="0.45" stop-color="#6a6a6a" stop-opacity="0.85"/><stop offset="1" stop-color="#6a6a6a" stop-opacity="0"/>
  </linearGradient>
  <linearGradient id="bd" x1="0" x2="1" y1="0" y2="0">
   <stop offset="0" stop-color="#1c1c1c"/><stop offset="1" stop-color="#111"/>
  </linearGradient>
  <linearGradient id="vm" x1="0" x2="0" y1="0" y2="1"><stop offset="0" stop-color="#fff" stop-opacity="0"/><stop offset="0.06" stop-color="#fff" stop-opacity="1"/><stop offset="0.94" stop-color="#fff" stop-opacity="1"/><stop offset="1" stop-color="#fff" stop-opacity="0"/></linearGradient>
  <mask id="vmask"><rect x="840" y="120" width="40" height="790" fill="url(#vm)"/></mask>
  <clipPath id="inn"><path d="M842.5,165 C842.5,122 858,108 900,98 C945,91 1012,88 1062,88 C1112,88 1179,91 1224,98 C1266,108 1281.5,122 1281.5,165 L1281.5,862 C1281.5,895 1266,912 1224,928 C1184,939 1120,942 1062,942 C1004,942 940,939 900,928 C858,912 842.5,895 842.5,862 Z" transform="translate(1062 515) scale(0.982 0.981) translate(-1062 -515)"/></clipPath>
 </defs>
 <path d="M842.5,165 C842.5,122 858,108 900,98 C945,91 1012,88 1062,88 C1112,88 1179,91 1224,98 C1266,108 1281.5,122 1281.5,165 L1281.5,862 C1281.5,895 1266,912 1224,928 C1184,939 1120,942 1062,942 C1004,942 940,939 900,928 C858,912 842.5,895 842.5,862 Z" fill="#333" stroke="#151515" stroke-width="1.5"/>
 <path d="M842.5,165 C842.5,122 858,108 900,98 C945,91 1012,88 1062,88 C1112,88 1179,91 1224,98 C1266,108 1281.5,122 1281.5,165 L1281.5,862 C1281.5,895 1266,912 1224,928 C1184,939 1120,942 1062,942 C1004,942 940,939 900,928 C858,912 842.5,895 842.5,862 Z" transform="translate(1062 515) scale(0.9955 0.994) translate(-1062 -515)" fill="#2a2a2a"/>
 <path d="M842.5,165 C842.5,122 858,108 900,98 C945,91 1012,88 1062,88 C1112,88 1179,91 1224,98 C1266,108 1281.5,122 1281.5,165 L1281.5,862 C1281.5,895 1266,912 1224,928 C1184,939 1120,942 1062,942 C1004,942 940,939 900,928 C858,912 842.5,895 842.5,862 Z" transform="translate(1062 515) scale(0.986 0.981) translate(-1062 -515)" fill="url(#bd)" stroke="#858585" stroke-width="1.1"/>
 <g clip-path="url(#inn)">
  <rect x="846" y="120" width="20" height="790" fill="url(#gl)" mask="url(#vmask)"/>
 </g>
 <path d="M1022,99 L1032,107 H1092 L1102,99 Z" fill="#222"/>
 <rect x="1030" y="103" width="64" height="4" fill="#2c2c2c"/>
 <circle cx="894" cy="131" r="5.5" fill="#1e1e1e"/><circle cx="909" cy="131" r="5.5" fill="#1e1e1e"/>
 <circle cx="1219" cy="129" r="9" fill="#1b1b1b"/><circle cx="1219" cy="129" r="1.8" fill="#2a2660"/>
</svg>
<!-- screen -->
<div class="a" style="left:864px;top:184px;width:396px;height:25px;background:#00574b"></div>
<div class="a" style="left:864px;top:209px;width:396px;height:58px;background:#008577"></div>
<div class="a" style="left:864px;top:267px;width:396px;height:527px;background:#00ffff"></div>
<div class="a" style="left:864px;top:267px;width:396px;height:3px;background:linear-gradient(#10d0d0,#00ffff)"></div>
<div class="a" style="left:864px;top:794px;width:396px;height:50px;background:#000"></div>
<svg class="a" style="left:864px;top:184px" width="396" height="25">
 <path d="M24 5 H31 A1 1 0 0 1 32 6 V19 A1 1 0 0 1 31 20 H22 A1 1 0 0 1 21 19 V8 Z" fill="#fff"/><rect x="24.5" y="8.5" width="1.2" height="3" fill="#00574b"/><rect x="26.8" y="8.5" width="1.2" height="3" fill="#00574b"/><rect x="29" y="8.5" width="1.2" height="3" fill="#00574b"/>
 <circle cx="51" cy="12.5" r="7" fill="#5f9c94" stroke="#d8e8e6" stroke-width="1"/>
 <path d="M291 10 A14 14 0 0 1 309 10 L300 20 Z" fill="#fff"/><path d="M303 15 L307 19 M307 15 L303 19" stroke="#fff" stroke-width="1.3"/>
 <path d="M311 20 L325 6 V20 Z" fill="#6fa89f"/><path d="M311 20 L320 11 V20 Z" fill="#fff"/>
 <rect x="335" y="6" width="8.5" height="14" rx="1" fill="#fff"/><rect x="337" y="4.5" width="4.5" height="2" fill="#fff"/>
</svg>
<div class="a ui" style="left:1215px;top:187px;font-size:15px;color:#fff;line-height:18px">1:22</div>
<div class="a ui" id="rl" style="left:881px;top:227px;font-size:19.5px;font-weight:bold;color:#fff;line-height:24px;letter-spacing:-0.25px">RelativeLayout</div>
<!-- grid -->
<div class="a" style="left:938px;top:408px;width:248px;height:247px;box-shadow:0 1px 2px rgba(0,0,0,0.25)"></div>
<div class="a" style="left:938px;top:407px;width:83px;height:82px;background:#f8f8ff"></div>
<div class="a" style="left:1021px;top:407px;width:82px;height:82px;background:#ff1493"></div>
<div class="a" style="left:1103px;top:407px;width:83px;height:82px;background:#ffff00"></div>
<div class="a" style="left:938px;top:489px;width:83px;height:83px;background:#006000"></div>
<div class="a" style="left:1021px;top:489px;width:82px;height:83px;background:#000"></div>
<div class="a" style="left:1103px;top:489px;width:83px;height:83px;background:#0000cd"></div>
<div class="a" style="left:938px;top:572px;width:83px;height:82px;background:#ff0000"></div>
<div class="a" style="left:1021px;top:572px;width:82px;height:82px;background:#4169e1"></div>
<div class="a" style="left:1103px;top:572px;width:83px;height:82px;background:#00ff00"></div>
<!-- nav buttons -->
<svg class="a" style="left:864px;top:794px" width="396" height="50">
 <path d="M83 25 L95.5 19 V31 Z" fill="#9e9e9e" stroke="#9e9e9e" stroke-width="1" stroke-linejoin="round"/>
 <circle cx="198" cy="25.5" r="6.8" fill="#9e9e9e"/>
 <rect x="300" y="19" width="13" height="13" rx="1" fill="#9e9e9e"/>
</svg>

<!-- emulator toolbar -->
<div class="a" style="left:1287px;top:88px;width:67px;height:531px;background:#f0f0f0;border:1px solid #111"></div>
<svg class="a" style="left:1287px;top:88px" width="67" height="531" fill="none" stroke="#546e7a">
 <path d="M14 17.5 H23" stroke-width="1.2"/>
 <path d="M43 14 L50 21 M50 14 L43 21" stroke-width="1.3"/>
 <!-- power -->
 <path d="M28.3 46.5 A8 8 0 1 0 37.7 46.5" stroke-width="2.4"/><path d="M33 42.5 V52" stroke-width="2.4"/>
 <!-- vol up -->
 <path d="M24.5 94 H28.5 L33.5 89 V105 L28.5 100 H24.5 Z" fill="#546e7a" stroke="none"/><path d="M36 92 A5.5 5.5 0 0 1 36 103" stroke-width="2.6"/>
 <!-- vol down -->
 <path d="M26 140 H30 L35 135 V151 L30 146 H26 Z" fill="#546e7a" stroke="none"/><path d="M37 140 A3.5 3.5 0 0 1 37 147 Z" fill="#546e7a" stroke="none"/>
 <!-- rotate left -->
 <g transform="translate(33,189) rotate(-45)"><rect x="-5.5" y="-9.5" width="11" height="19" rx="1.5" stroke-width="2.6"/></g>
 <path d="M34 177 A11.5 11.5 0 0 1 44.5 187.5" stroke-width="1.7"/><path d="M31.5 177 L35.5 174.5 V179.5 Z" fill="#546e7a" stroke="none"/>
 <!-- rotate right -->
 <g transform="translate(33,233) rotate(45)"><rect x="-5.5" y="-9.5" width="11" height="19" rx="1.5" stroke-width="2.6"/></g>
 <path d="M32 221 A11.5 11.5 0 0 0 21.5 231.5" stroke-width="1.7"/><path d="M34.5 221 L30.5 218.5 V223.5 Z" fill="#546e7a" stroke="none"/>
 <!-- camera -->
 <path d="M23 272 A2 2 0 0 1 25 270 H28 L30 267.5 H36 L38 270 H41 A2 2 0 0 1 43 272 V284 A2 2 0 0 1 41 286 H25 A2 2 0 0 1 23 284 Z" fill="#546e7a" stroke="none"/><circle cx="33" cy="278" r="3.6" fill="none" stroke="#f0f0f0" stroke-width="1.8"/>
 <!-- zoom -->
 <circle cx="31" cy="320" r="6" stroke-width="1.8"/><path d="M35.5 324.5 L40 329" stroke-width="2.2"/><path d="M28 320 H34 M31 317 V323" stroke-width="1.5"/>
 <!-- back -->
 <path d="M39 360 L28 368 L39 376 Z" stroke-width="1.8" stroke-linejoin="round"/>
 <!-- home -->
 <circle cx="33" cy="412.5" r="7" stroke-width="1.8"/>
 <!-- square -->
 <rect x="26" y="450.5" width="14" height="14" stroke-width="1.8"/>
 <!-- more -->
 <circle cx="27" cy="503" r="1.8" fill="#546e7a" stroke="none"/><circle cx="33" cy="503" r="1.8" fill="#546e7a" stroke="none"/><circle cx="39" cy="503" r="1.8" fill="#546e7a" stroke="none"/>
</svg>
</body></html>
